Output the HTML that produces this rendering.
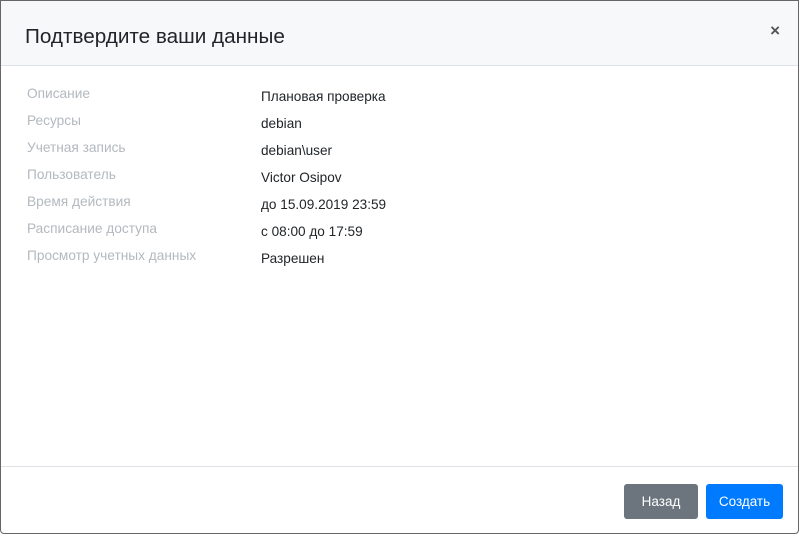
<!DOCTYPE html><html><head><style>
body{margin:0;width:800px;height:535px;background:#fff;font-family:"Liberation Sans",sans-serif;overflow:hidden}
.m{position:absolute;left:0;top:0;width:797px;height:532px;border:1px solid #666;border-radius:0 0 4px 4px;background:#fff}
.h{height:64px;background:#f7f8f9;border-bottom:1px solid #dee2e6;position:relative}
.h .t{position:absolute;left:24px;top:24px;font-size:20.7px;color:#212529}
.x{position:absolute;right:18px;top:20px;font-size:17px;font-weight:bold;color:#555}
.r{position:absolute}
.l{left:26px;color:#b3b9be;font-size:13.7px}
.v{left:260px;color:#212529;font-size:13.6px}
.f{position:absolute;left:0;right:0;top:465px;border-top:1px solid #dee2e6}
.b{position:absolute;top:483px;height:35px;border-radius:3px;color:#fff;font-size:13.5px;line-height:35px;text-align:center}
</style></head><body><div class="m">
<div class="h"><div class="t">Подтвердите ваши данные</div><div class="x">×</div></div>
<div class="r l" style="top:85px">Описание</div><div class="r v" style="top:88px">Плановая проверка</div>
<div class="r l" style="top:112px">Ресурсы</div><div class="r v" style="top:115px">debian</div>
<div class="r l" style="top:139px">Учетная запись</div><div class="r v" style="top:142px">debian\user</div>
<div class="r l" style="top:166px">Пользователь</div><div class="r v" style="top:169px">Victor Osipov</div>
<div class="r l" style="top:193px">Время действия</div><div class="r v" style="top:196px">до 15.09.2019 23:59</div>
<div class="r l" style="top:220px">Расписание доступа</div><div class="r v" style="top:223px">с 08:00 до 17:59</div>
<div class="r l" style="top:247px">Просмотр учетных данных</div><div class="r v" style="top:250px">Разрешен</div>
<div class="f"></div>
<div class="b" style="left:623px;width:74px;background:#6c757d">Назад</div>
<div class="b" style="left:705px;width:77px;background:#007bff">Создать</div>
</div></body></html>
